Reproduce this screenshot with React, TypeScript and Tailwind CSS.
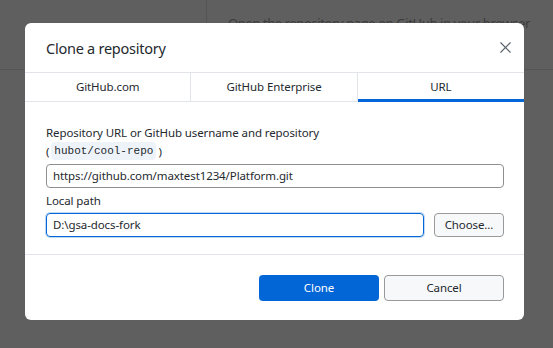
import { X } from "lucide-react";

const TABS = ["GitHub.com", "GitHub Enterprise", "URL"];

export default function App() {
  const font = { fontFamily: '"Noto Sans", "Segoe UI", sans-serif' };

  return (
    <div className="relative w-[553px] h-[348px] overflow-hidden bg-[#5f5f5f] tracking-[-0.1px]" style={font}>
      {/* dimmed app behind the modal */}
      <div className="flex h-[70px] border-b border-[#555555]">
        <div className="w-[207px] shrink-0 border-r border-[#555555]" />
        <div className="flex-1 pl-[21px] pt-[14px] text-[13px] tracking-[-0.4px] text-[#3b3b3b]">
          Open the repository page on GitHub in your browser
        </div>
      </div>

      {/* dialog */}
      <div className="absolute left-[25px] top-[23px] w-[499px] h-[297px] rounded-[6px] bg-white flex flex-col text-[#24292e]">
        <div className="h-[50px] flex items-center justify-between pl-[21px] pr-[8px] border-b border-[#e1e4e8]">
          <h1 className="text-[14.5px] font-normal leading-none tracking-[-0.25px] pt-[2px]">Clone a repository</h1>
          <button className="w-[22px] h-[22px] flex items-center justify-center text-[#586069]">
            <X size={19} strokeWidth={1.35} />
          </button>
        </div>

        <div className="grid grid-cols-3 h-[29px] border-b border-[#e1e4e8]">
          {TABS.map((t, i) => (
            <div
              key={t}
              className={`relative flex items-center justify-center text-[11.5px] ${
                i < 2 ? "border-r border-[#e1e4e8]" : ""
              }`}
            >
              {t}
              {i === 2 && <div className="absolute left-0 right-0 bottom-[-1px] h-[3px] bg-[#0366d6]" />}
            </div>
          ))}
        </div>

        <div className="flex-1 flex flex-col pl-[21px] pr-[20px] pt-[22px] text-[11.5px]">
          <div className="leading-[17px]">Repository URL or GitHub username and repository</div>
          <div className="flex items-center leading-[17px] mt-[1px]">
            (
            <code
              className="mx-[2px] px-[3px] rounded-[4px] bg-[#eef3fa] text-[11px] leading-[18px] tracking-normal"
              style={{ fontFamily: '"Liberation Mono", monospace' }}
            >
              hubot/cool-repo
            </code>
            )
          </div>
          <div className="mt-[4px] h-[24px] rounded-[4px] border border-[#8f8f8f] flex items-center px-[6px]">
            https://github.com/maxtest1234/Platform.git
          </div>
          <div className="mt-[4px] leading-[17px]">Local path</div>
          <div className="mt-[4px] flex gap-[10px]">
            <div className="flex-1 h-[24px] rounded-[4px] border border-[#0366d6] shadow-[0_0_0_1px_rgba(3,102,214,0.25)] flex items-center px-[6px]">
              D:\gsa-docs-fork
            </div>
            <button className="w-[70px] h-[24px] rounded-[4px] border border-[#9a9a9a] bg-[#f6f8fa] text-[11.5px]">
              Choose...
            </button>
          </div>
        </div>

        <div className="h-[66px] border-t border-[#e1e4e8] flex justify-end items-start gap-[5px] pt-[20px] pr-[20px]">
          <button className="w-[120px] h-[26px] rounded-[4px] bg-[#0366d6] text-white text-[11.5px]">Clone</button>
          <button className="w-[120px] h-[26px] rounded-[4px] border border-[#9a9a9a] bg-[#f6f8fa] text-[11.5px]">
            Cancel
          </button>
        </div>
      </div>
    </div>
  );
}
